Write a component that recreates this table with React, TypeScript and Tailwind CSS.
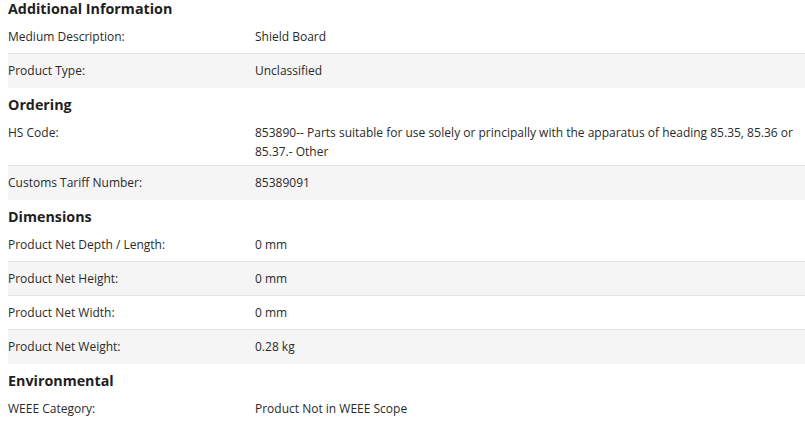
import { Fragment } from "react";

type Row = { label: string; value: string };
type Section = { title: string; rows: Row[] };

const sections: Section[] = [
  {
    title: "Additional Information",
    rows: [
      { label: "Medium Description:", value: "Shield Board" },
      { label: "Product Type:", value: "Unclassified" },
    ],
  },
  {
    title: "Ordering",
    rows: [
      {
        label: "HS Code:",
        value:
          "853890-- Parts suitable for use solely or principally with the apparatus of heading 85.35, 85.36 or 85.37.- Other",
      },
      { label: "Customs Tariff Number:", value: "85389091" },
    ],
  },
  {
    title: "Dimensions",
    rows: [
      { label: "Product Net Depth / Length:", value: "0 mm" },
      { label: "Product Net Height:", value: "0 mm" },
      { label: "Product Net Width:", value: "0 mm" },
      { label: "Product Net Weight:", value: "0.28 kg" },
    ],
  },
  {
    title: "Environmental",
    rows: [{ label: "WEEE Category:", value: "Product Not in WEEE Scope" }],
  },
];

export default function App() {
  return (
    <div className="w-[805px] h-[430px] overflow-hidden bg-white pl-2 font-['Open_Sans',sans-serif] text-[12px] text-[#2a2a2a]">
      <div className="-mt-[1px]">
        {sections.map((section, si) => (
          <Fragment key={section.title}>
            <h2
              className={`${si === 0 ? "" : "mt-[7px]"} mb-[1px] text-[14.3px] leading-5 font-bold text-[#1f1f1f]`}
            >
              {section.title}
            </h2>
            <div>
              {section.rows.map((row, ri) => {
                const last = ri === section.rows.length - 1;
                const gray = ri % 2 === 1;
                return (
                  <div
                    key={row.label}
                    className={`flex min-h-[34px] pt-[7px] pb-[4px] leading-[19px] border-b ${gray ? "bg-[#f5f5f5]" : "bg-white"} ${last ? "border-transparent" : "border-[#e3e3e3]"}`}
                  >
                    <div className="w-[247px] shrink-0">{row.label}</div>
                    <div className="flex-1">{row.value}</div>
                  </div>
                );
              })}
            </div>
          </Fragment>
        ))}
      </div>
    </div>
  );
}
